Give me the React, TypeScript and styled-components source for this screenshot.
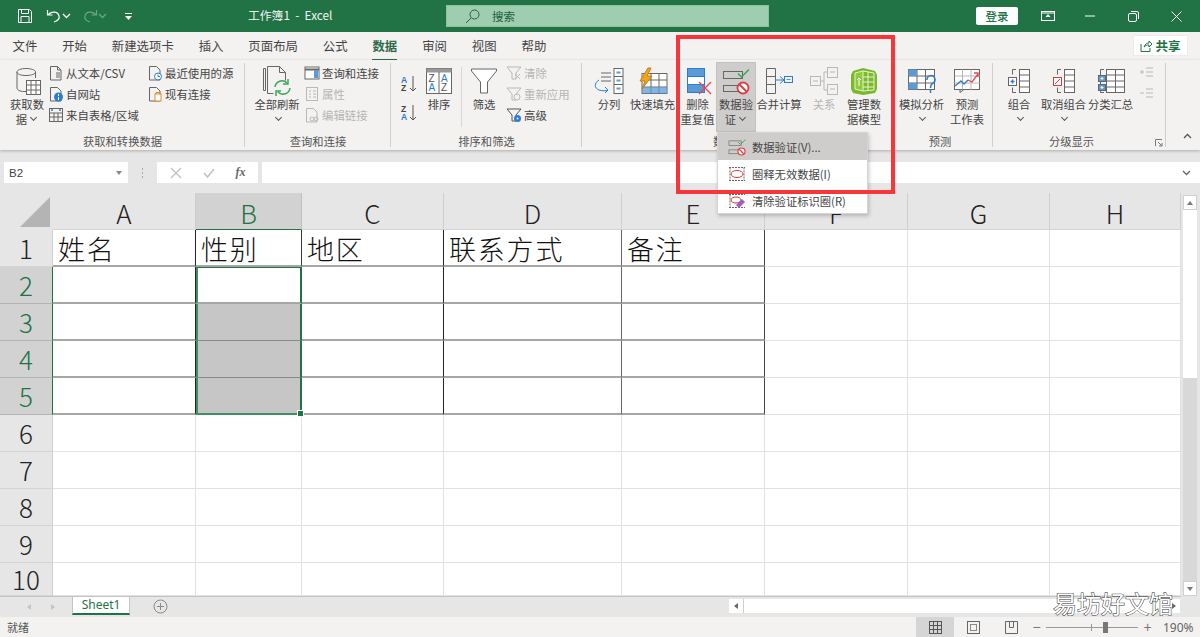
import React from "react";
import styled, { createGlobalStyle } from "styled-components";

const CJK = `"Noto Sans CJK SC", "Noto Sans", sans-serif`;

const Global = createGlobalStyle`
  html, body { margin: 0; padding: 0; width: 1200px; height: 637px; overflow: hidden; }
  body { font-family: ${CJK}; color: #444; }
  * { box-sizing: border-box; }
`;

const Page = styled.div`
  position: relative; width: 1200px; height: 637px; display: flex; flex-direction: column;
  background: #e6e6e6; overflow: hidden;
`;

/* ---------- title bar ---------- */
const TitleBar = styled.header`
  height: 32px; background: #217346; display: flex; align-items: center; color: #fff; flex: none;
`;
const Qat = styled.div`
  width: 248px; display: flex; align-items: center; padding-left: 17px; flex: none;
`;
const QatItem = styled.span<{ $w: number }>`
  width: ${p => p.$w}px; display: flex; align-items: center; flex: none;
`;
const DocTitle = styled.div`
  width: 198px; flex: none; font-size: 11.8px; line-height: 16px; margin-top: -2px; color: #f0f6f2; white-space: pre;
`;
const SearchBox = styled.div`
  width: 323px; height: 22px; background: #9fcdb0; border: 1px solid #8cc0a2; display: flex; align-items: center;
  padding-left: 18px; gap: 12px; color: #23613e; font-size: 11.5px; flex: none;
`;
const LoginBtn = styled.button`
  margin-left: 207px; width: 42px; height: 18px; border: 0; border-radius: 2px; background: #fff; color: #217346;
  font: 500 11.5px ${CJK}; padding: 0; flex: none;
`;
const WinBtn = styled.span<{ $ml: number }>`
  margin-left: ${p => p.$ml}px; display: flex; flex: none;
`;

/* ---------- tabs ---------- */
const TabBar = styled.nav`
  height: 28px; background: #f3f2f1; display: flex; align-items: flex-start; padding: 5px 12.5px 0; gap: 24.9px; position: relative; flex: none;
`;
const Tab = styled.div<{ $on?: boolean }>`
  font-size: 12.4px; line-height: 18px; height: 24px; color: ${p => (p.$on ? "#2f6b4a" : "#444")};
  font-weight: ${p => (p.$on ? 700 : 400)}; border-bottom: ${p => (p.$on ? "2.5px solid #217346" : "0")}; white-space: nowrap;
`;
const ShareBtn = styled.button`
  position: absolute; left: 1133px; top: 3px; width: 55px; height: 21px; border: 1px solid #ececec; background: #fff; color: #217346;
  font: 700 12.5px ${CJK}; display: flex; align-items: center; justify-content: center; gap: 3px; padding: 0;
`;

/* ---------- ribbon ---------- */
const Ribbon = styled.section`
  height: 90px; background: #f3f2f1; display: flex; flex: none; box-shadow: 0 1px 3px rgba(0,0,0,.25); position: relative;
`;
const Group = styled.div<{ $w: number; $last?: boolean }>`
  width: ${p => p.$w}px; flex: none; display: flex; flex-direction: column; position: relative;
  &::after {
    content: ""; display: ${p => (p.$last ? "none" : "block")}; position: absolute; right: 0; top: 3px; bottom: 3px; width: 1px; background: #d0cfce;
  }
`;
const GroupBody = styled.div<{ $pl: number }>`
  flex: 1; display: flex; padding-left: ${p => p.$pl}px; min-height: 0;
`;
const GroupLabel = styled.div<{ $pr?: number }>`
  height: 16px; padding-right: ${p => p.$pr ?? 0}px; text-align: center; font-size: 11.3px; line-height: 14px; color: #555; flex: none;
`;
const BigBtn = styled.div<{ $w: number; $ml?: number; $on?: boolean; $off?: boolean }>`
  width: ${p => p.$w}px; margin-left: ${p => p.$ml ?? 0}px; flex: none; height: 70px; margin-top: 2px; display: flex; flex-direction: column;
  align-items: center; font-size: 11.3px; line-height: 15px; text-align: center; white-space: nowrap;
  color: ${p => (p.$off ? "#b5b5b5" : "#444")};
  background: ${p => (p.$on ? "#cfcdcb" : "transparent")};
  box-shadow: ${p => (p.$on ? "inset 0 0 0 1px #c4c2c0" : "none")};
`;
const BigIcon = styled.div`
  height: 35px; display: flex; align-items: center; justify-content: center; flex: none; padding-top: 2px;
`;
const Caret = styled.span`
  display: inline-block; width: 9px; height: 9px; vertical-align: middle; margin-left: 2px; position: relative; top: -1px;
  &::before {
    content: ""; display: block; width: 4px; height: 4px; border-right: 1px solid #555; border-bottom: 1px solid #555; transform: rotate(45deg); margin: 0 0 0 2px;
  }
`;
const SmallCol = styled.div<{ $w: number; $ml?: number }>`
  width: ${p => p.$w}px; margin-left: ${p => p.$ml ?? 0}px; flex: none; padding-top: 2px; display: flex; flex-direction: column;
`;
const SmallRow = styled.div<{ $off?: boolean }>`
  height: 21px; display: flex; align-items: center; gap: 2px; font-size: 11.4px; white-space: nowrap;
  color: ${p => (p.$off ? "#b5b5b5" : "#444")};
`;
const SortStack = styled.div`
  width: 25px; flex: none; padding-top: 14px; display: flex; flex-direction: column; gap: 9px;
`;
const VSep = styled.div`
  width: 1px; height: 60px; margin: 7px 8px 0 8px; background: #d8d7d6; flex: none;
`;
const Launcher = styled.div`
  position: absolute; right: 3px; bottom: 3px; display: flex;
`;

/* ---------- formula bar ---------- */
const FormulaBar = styled.div`
  margin-top: 12px; height: 21px; display: flex; align-items: stretch; padding-left: 4px; flex: none;
`;
const NameBox = styled.div`
  width: 124px; background: #fff; display: flex; align-items: center; justify-content: space-between; padding: 0 5px; font-size: 11.5px; color: #444;
  font-family: "Liberation Sans", sans-serif;
`;
const Dots = styled.div`
  width: 29px; display: flex; align-items: center; justify-content: center; color: #aaa;
`;
const FxBox = styled.div`
  width: 101px; background: #fff; display: flex; align-items: center; justify-content: space-around; padding: 0 2px;
`;
const FxText = styled.span`
  font: italic 700 12px "Liberation Serif", serif; color: #666;
`;
const FormulaInput = styled.div`
  margin-left: 4px; flex: 1; background: #fff; display: flex; align-items: center; justify-content: flex-end; padding-right: 9px;
`;

/* ---------- sheet ---------- */
const SheetArea = styled.main`
  margin-top: 10px; height: 404px; display: flex; flex: none;
`;
const Grid = styled.div`
  width: 1181px; display: grid; flex: none; background: #fff; border-bottom: 1px solid #c4c4c4;
  grid-template-columns: 53px 143px 106px 142px 178px 143px 143px 142px 131px;
  grid-template-rows: 37px repeat(9, 37px) 1fr;
`;
const Corner = styled.div`
  background: #e6e6e6; display: flex; align-items: flex-end; justify-content: flex-end; padding: 0 2px 2px 0;
`;
const ColHead = styled.div<{ $on?: boolean }>`
  background: ${p => (p.$on ? "#d2d2d2" : "#e6e6e6")}; color: ${p => (p.$on ? "#217346" : "#222")};
  border-right: 1px solid ${p => (p.$on ? "#c0c0c0" : "#cfcfcf")};
  border-bottom: 1px solid ${p => (p.$on ? "#217346" : "#d4d4d4")};
  display: flex; align-items: center; justify-content: center; font: 300 26px/30px ${CJK}; padding-top: 3px;
`;
const RowHead = styled.div<{ $on?: boolean }>`
  background: ${p => (p.$on ? "#d2d2d2" : "#e6e6e6")}; color: ${p => (p.$on ? "#217346" : "#222")};
  border-right: 1px solid ${p => (p.$on ? "#217346" : "#cfcfcf")};
  border-bottom: 1px solid ${p => (p.$on ? "#b4b4b4" : "#d4d4d4")};
  display: flex; align-items: center; justify-content: center; font: 300 26px/30px ${CJK}; padding-bottom: 1px;
`;
const Cell = styled.div<{ $tb?: boolean; $shade?: string; $sel?: boolean; $gray?: boolean; $first?: boolean; $lastSel?: boolean }>`
  position: relative;
  background: ${p => (p.$gray ? "#c6c6c6" : "#fff")};
  border-right: 1px solid ${p => p.$shade ?? "#e2e2e2"};
  border-bottom: ${p => (p.$tb ? "2px solid #a6a6a6" : "1px solid #e2e2e2")};
  font: 300 27px/36px ${CJK}; color: #111; letter-spacing: 1.8px; padding-left: 5px; padding-top: 1px; white-space: nowrap;
  ${p => p.$sel && `
    border-left: 2px solid #3f8f66; border-right: 2px solid #217346;
    border-bottom: ${p.$lastSel ? "2px solid #3f8f66" : p.$gray ? "1px solid #8a8a8a" : "2px solid #a6a6a6"};
  `}
  ${p => p.$first && `border-top: 1px solid #217346;`}
`;
const Handle = styled.span`
  position: absolute; right: -4px; bottom: -4px; width: 5px; height: 5px; background: #217346; border: 1px solid #fff; box-sizing: content-box; z-index: 2;
`;
const VScroll = styled.aside`
  width: 19px; background: #e6e6e6; display: flex; flex-direction: column; padding: 2px 3px 1px 2px; flex: none;
`;
const VTrack = styled.div`
  flex: 1; background: #d8d8d8; display: flex; flex-direction: column;
`;
const ScrollBtn = styled.div`
  height: 15px; background: #fff; border: 1px solid #d0d0d0; display: flex; align-items: center; justify-content: center; flex: none;
`;
const ScrollThumb = styled.div`
  height: 168px; background: #fff; margin-bottom: auto; flex: none;
`;

/* ---------- sheet tabs ---------- */
const SheetBar = styled.div`
  height: 20px; background: #e6e6e6; display: flex; align-items: flex-start; flex: none;
`;
const SheetNav = styled.div`
  width: 72px; height: 19px; display: flex; align-items: center; justify-content: center; gap: 16px; padding-left: 10px; flex: none;
`;
const SheetTab = styled.div`
  width: 58px; height: 18px; background: #fff; color: #217346; border-bottom: 2px solid #217346; border-left: 1px solid #c4c4c4; border-right: 1px solid #c4c4c4;
  font: 400 12px/15px "Noto Sans", sans-serif; text-align: center; flex: none;
`;
const AddSheet = styled.div`
  margin: 2px 0 0 23px; display: flex; flex: none;
`;
const HScroll = styled.div`
  margin: 2px 0 0 561px; width: 451px; display: flex; align-items: center; flex: none;
`;
const HTrack = styled.div`
  flex: 1; height: 14px; background: #fff; display: flex; align-items: center; justify-content: flex-end; padding-right: 2px;
`;
const HEnd = styled.div`
  width: 15px; height: 14px; display: flex; align-items: center; justify-content: center; background: #fff; border-right: 1px solid #d0d0d0; flex: none;
`;

/* ---------- status bar ---------- */
const StatusBar = styled.footer`
  height: 20px; background: #f3f2f1; display: flex; align-items: center; padding-left: 7px; font-size: 11px; color: #555; flex: none;
`;
const StatusText = styled.span`
  width: 909px; flex: none;
`;
const ViewBtn = styled.div<{ $on?: boolean }>`
  width: 38px; height: 20px; background: ${p => (p.$on ? "#d5d5d5" : "transparent")}; display: flex; align-items: center; justify-content: center; flex: none;
`;
const ZoomMark = styled.span`
  width: 13px; text-align: center; font: 400 14px "Liberation Sans", sans-serif; color: #777; flex: none;
`;
const ZoomTrack = styled.div`
  width: 92px; height: 1px; margin: 0 3px; background: #999; position: relative; flex: none;
`;
const ZoomTick = styled.span`
  position: absolute; left: 45px; top: -3px; width: 1px; height: 7px; background: #999;
`;
const ZoomThumb = styled.span`
  position: absolute; left: 57px; top: -5px; width: 5px; height: 11px; background: #777;
`;
const ZoomVal = styled.span`
  margin-left: 9px; font: 400 12px "Noto Sans", sans-serif; color: #666; flex: none;
`;

/* ---------- overlays ---------- */
const Menu = styled.div`
  position: absolute; left: 717px; top: 132px; width: 151px; height: 82px; background: #fff; border: 1px solid #d4d4d4; box-shadow: 1px 2px 4px rgba(0,0,0,.22); z-index: 5;
`;
const MenuItem = styled.div<{ $on?: boolean }>`
  height: 27px; display: flex; align-items: center; gap: 6px; padding-left: 10px; font-size: 11.3px; color: #444; white-space: nowrap;
  background: ${p => (p.$on ? "#cfcdcb" : "transparent")};
`;
const RedBox = styled.div`
  position: absolute; left: 676px; top: 35px; width: 219px; height: 159px; border: 4px solid #f8353b; z-index: 6; pointer-events: none;
`;
const Watermark = styled.div`
  position: absolute; left: 1053px; top: 589px; z-index: 7; font: 400 24px/28px ${CJK}; color: #fff; -webkit-text-stroke: 1px #333; paint-order: stroke fill; white-space: nowrap;
`;

/* ---------- icons ---------- */
const Svg = ({ w, h, children }: { w: number; h: number; children: React.ReactNode }) => (
  <svg width={w} height={h} viewBox={`0 0 ${w} ${h}`} fill="none" strokeWidth="1">{children}</svg>
);
const G = "#666";
const B = "#5b9bd5";
const Lg = "#b8b8b8";

const DocS = ({ s = G }: { s?: string }) => <path d="M2.500 1.500h7l3.500 3.500v10h-10.500z" stroke={s} />;

const IcoDb = () => (
  <Svg w={28} h={30}>
    <path d="M4 6v16c0 2 3 3.500 7 3.500h3M22.500 6v6M4 6c0-2 4-3.500 9-3.500s9.500 1.500 9.500 3.500-4 3.500-9.500 3.500S4 8 4 6z" stroke={G} />
    <rect x="13.500" y="14.500" width="14" height="14" fill="#fff" stroke={G} />
    <path d="M13.500 19h14M13.500 24h14M18 14.500v14M23 14.500v14" stroke={G} />
  </Svg>
);
const IcoText = () => <Svg w={16} h={16}><DocS /><path d="M8 8h4M8 10h4M8 12h4" stroke={G} /><path d="M9.500 1.500v3.500h3.500" stroke={G} /></Svg>;
const IcoWeb = () => <Svg w={16} h={16}><DocS /><circle cx="10.500" cy="11" r="4.500" fill="#2b7cd3" /><path d="M10.500 8v2M10.500 11v3" stroke="#fff" /></Svg>;
const IcoTable = () => (
  <Svg w={16} h={16}>
    <rect x="1.500" y="1.500" width="13" height="13" stroke={G} />
    <path d="M1.500 6h13M1.500 10h13M6 6v8.500M10 6v8.500" stroke={G} />
    <path d="M3 3h2M11 3h2" stroke={B} strokeWidth="2" />
  </Svg>
);
const IcoRecent = () => <Svg w={16} h={16}><DocS /><circle cx="11" cy="11.500" r="3.500" fill="#fff" stroke="#2b7cd3" /><path d="M11 9.500v2h2" stroke="#2b7cd3" /></Svg>;
const IcoExist = () => <Svg w={16} h={16}><DocS /><rect x="8" y="8" width="6" height="7" fill="#fff" stroke="#e8862e" /><path d="M9 8V6.500h4V8" stroke="#e8862e" /></Svg>;
const IcoRefresh = () => (
  <Svg w={32} h={34}>
    <path d="M2.500 4.500h2v22h-2zM6.500 2.500h12l6 6v8M6.500 2.500v27h6" stroke={G} />
    <path d="M18.500 2.500v6h6" stroke={G} />
    <path d="M14 23a7 7 0 0 1 12-4M29 24a7 7 0 0 1-12 4" stroke="#3aa655" strokeWidth="1.500" />
    <path d="M27 15v5h-5M15 32v-5h5" stroke="#3aa655" strokeWidth="1.500" />
  </Svg>
);
const IcoQuery = () => (
  <Svg w={16} h={16}>
    <rect x="1" y="2" width="14" height="12" fill="#fff" stroke={G} />
    <path d="M1 4.500h14" stroke={G} strokeWidth="2" />
    <rect x="10" y="5" width="4" height="8" fill={B} />
  </Svg>
);
const IcoProp = () => <Svg w={16} h={16}><rect x="2.500" y="1.500" width="11" height="13" stroke={Lg} /><path d="M5 5h2M5 8h2M5 11h2M9 5h3M9 8h3M9 11h3" stroke={Lg} /></Svg>;
const IcoEdit = () => <Svg w={16} h={16}><DocS s={Lg} /><circle cx="8" cy="12" r="2" stroke={Lg} /><circle cx="12" cy="12" r="2" stroke={Lg} /></Svg>;
const IcoAz = ({ flip }: { flip?: boolean }) => (
  <svg width="18" height="20" viewBox="0 0 18 20" fill="none">
    <text x="1" y="8.500" fontSize="8.500" fontWeight="700" fontFamily="Liberation Sans" fill={flip ? "#444" : "#2b7cd3"}>{flip ? "Z" : "A"}</text>
    <text x="1" y="17" fontSize="8.500" fontWeight="700" fontFamily="Liberation Sans" fill={flip ? "#2b7cd3" : "#444"}>{flip ? "A" : "Z"}</text>
    <path d="M13 2v15M10 14l3 3 3-3" stroke="#555" />
  </svg>
);
const IcoSort = () => (
  <svg width="28" height="28" viewBox="0 0 28 28" fill="none">
    <rect x="1.500" y="1.500" width="25" height="25" fill="#fff" stroke="#666" />
    <rect x="1.500" y="1.500" width="25" height="4" fill="#999" />
    <path d="M14 5v21" stroke="#666" />
    <text x="3.500" y="15" fontSize="10" fontFamily="Liberation Sans" fill="#555">Z</text>
    <text x="3.500" y="24" fontSize="10" fontFamily="Liberation Sans" fill="#2b7cd3">A</text>
    <text x="16" y="15" fontSize="10" fontFamily="Liberation Sans" fill="#2b7cd3">A</text>
    <text x="16" y="24" fontSize="10" fontFamily="Liberation Sans" fill="#555">Z</text>
  </svg>
);
const IcoFilter = () => <Svg w={28} h={28}><path d="M1.500 2h25v2l-9 11v11h-7V15l-9-11z" fill="#fff" stroke={G} /></Svg>;
const IcoClear = () => <Svg w={16} h={16}><path d="M1 2h14l-5 6v6H6V8z" stroke={Lg} /><path d="M9 9l5 5M14 9l-5 5" stroke={Lg} /></Svg>;
const IcoReapply = () => <Svg w={16} h={16}><path d="M1 2h14l-5 6v6H6V8z" stroke={Lg} /><circle cx="11" cy="11" r="3" stroke={Lg} fill="#f3f2f1" /></Svg>;
const IcoAdv = () => <Svg w={16} h={16}><path d="M1 2h14l-5 6v6H6V8z" stroke="#555" /><circle cx="11.500" cy="11.500" r="3.500" fill="#2b7cd3" /><circle cx="11.500" cy="11.500" r="1" fill="#fff" /></Svg>;
const IcoSplit = () => (
  <Svg w={30} h={28}>
    <rect x="20" y="1.500" width="9" height="25" fill="#fff" stroke={G} />
    <path d="M20 9.500h9M20 17.500h9M7 6h10M7 10h10M7 14h10" stroke={G} />
    <path d="M22.500 5.500h4M22.500 13.500h4M22.500 21.500h4" stroke={B} strokeWidth="2" />
    <path d="M5 13c-5 3-5 8 0 10 3 1 7 1 9 0M11 20l3 3-3 3" stroke="#2b7cd3" />
  </Svg>
);
const IcoFlash = () => (
  <Svg w={30} h={28}>
    <rect x="4" y="6.500" width="25" height="20" fill="#fff" stroke={G} />
    <path d="M4 13h25M4 20h25M13 6.500v20M21 6.500v20" stroke={G} />
    <rect x="4" y="20" width="25" height="6.500" fill={B} opacity=".75" />
    <path d="M10 1L2 14h5l-3 8 10-13H9l4-8z" fill="#f2a31f" stroke="#c47f0e" />
  </Svg>
);
const IcoDedupe = () => (
  <Svg w={28} h={28}>
    <rect x="3.500" y="1.500" width="17" height="24" fill="#fff" stroke="#2b7cd3" />
    <rect x="3.500" y="1.500" width="17" height="8" fill={B} stroke="#2b7cd3" />
    <rect x="3.500" y="17.500" width="17" height="8" fill={B} stroke="#2b7cd3" />
    <path d="M15 15l12 12M27 15L15 27" stroke="#e8464a" strokeWidth="1.300" />
  </Svg>
);
const IcoValidate = ({ s = 28 }: { s?: number }) => (
  <svg width={s} height={s} viewBox="0 0 28 28" fill="none">
    <rect x="1.500" y="4.500" width="19" height="7" stroke="#666" />
    <rect x="1.500" y="18.500" width="16" height="6" stroke="#666" />
    <path d="M16 6.500l3.500 3.500L27 2.500" stroke="#3aa655" strokeWidth="1.500" />
    <circle cx="21" cy="21" r="5.500" fill="#fff" stroke="#e0393e" strokeWidth="1.800" />
    <path d="M17.500 17.500l7 7" stroke="#e0393e" strokeWidth="1.800" />
  </svg>
);
const IcoConsol = () => (
  <Svg w={28} h={28}>
    <path d="M1.500 1.500h9v25h-9zM1.500 9.500h9M1.500 17.500h9" stroke={G} />
    <path d="M10 13h9M15 9.500l4 3.500-4 3.500" stroke="#2b7cd3" />
    <rect x="19.500" y="9.500" width="8" height="6" stroke="#2b7cd3" />
    <path d="M21.500 12.500h4" stroke={B} />
  </Svg>
);
const IcoRel = () => (
  <Svg w={28} h={28}>
    <rect x="0.500" y="9.500" width="10" height="9" stroke={Lg} />
    <rect x="17.500" y="0.500" width="10" height="10" stroke={Lg} />
    <rect x="17.500" y="17.500" width="10" height="10" stroke={Lg} />
    <path d="M10 14h4V5h3M14 14v9h3M3 14h5M20 5h5M20 22h5" stroke={Lg} />
  </Svg>
);
const IcoModel = () => (
  <Svg w={28} h={28}>
    <path d="M3 4l10-3 12 3 2 4v14l-2 4-12 2-10-2-2-4V8z" fill="#7ab929" />
    <path d="M5 6l8-2v20l-8-2z" fill="#8ccb3a" stroke="#e6f3d6" />
    <path d="M13 4l11 2v17l-11 1" stroke="#e6f3d6" />
    <path d="M13 10h11M13 15h11M13 20h11M18 5v19" stroke="#e6f3d6" />
    <path d="M9 19v-8M7 13l2-2 2 2" stroke="#fff" />
  </Svg>
);
const IcoWhatIf = () => (
  <Svg w={30} h={26}>
    <rect x="1.500" y="1.500" width="26" height="20" fill="#fff" stroke={G} />
    <path d="M1.500 8h26M1.500 15h26M10 1.500v20M18.500 1.500v20" stroke={G} />
    <rect x="1.500" y="1.500" width="8.500" height="6.500" fill={B} />
    <rect x="1.500" y="15" width="8.500" height="6.500" fill={B} />
    <path d="M20 12a4 4 0 1 1 6 3c-2 1-2.500 3-2.500 5M23.500 22v3" stroke="#2b7cd3" strokeWidth="1.500" />
  </Svg>
);
const IcoForecast = () => (
  <Svg w={28} h={26}>
    <rect x="1.500" y="1.500" width="25" height="20" fill="#fff" stroke={G} />
    <path d="M1.500 8h25M1.500 15h25M9.500 1.500v20M18 1.500v20" stroke={Lg} />
    <path d="M2 18l6-5 3 3 4-4" stroke="#2b7cd3" strokeWidth="1.300" />
    <path d="M15 12l4 2 6-8M21 5h4v4" stroke="#e8464a" strokeWidth="1.300" />
    <path d="M7 21.500v3l4-3" stroke={G} />
  </Svg>
);
const IcoGroup = ({ ungroup }: { ungroup?: boolean }) => (
  <Svg w={24} h={26}>
    <path d="M9 1.500H5.500v5M9 24.500H5.500v-5" stroke={G} />
    <rect x="12.500" y="1.500" width="10" height="23" fill="#fff" stroke={G} />
    <path d="M12.500 7h10M12.500 13h10M12.500 19h10" stroke={G} />
    <rect x="1.500" y="9.500" width="8" height="8" fill="#fff" stroke={ungroup ? "#e0393e" : G} />
    {ungroup ? <path d="M3 16l5-5" stroke="#e0393e" /> : <path d="M3.500 13.500h4M5.500 11.500v4" stroke="#2b7cd3" strokeWidth="1.500" />}
  </Svg>
);
const IcoSubtotal = () => (
  <Svg w={28} h={26}>
    <rect x="9.500" y="1.500" width="18" height="23" fill="#fff" stroke={G} />
    <path d="M9.500 7h18M9.500 13h18M9.500 19h18M18.500 1.500v23M7 1.500H3.500v23H7" stroke={G} />
    <rect x="1.500" y="7.500" width="7" height="6" fill={B} stroke={G} />
    <rect x="1.500" y="16.500" width="7" height="6" fill={B} stroke={G} />
    <path d="M3.500 10.500h3M5 9v3M3.500 19.500h3M5 18v3" stroke="#fff" />
  </Svg>
);
const IcoOutline = ({ minus }: { minus?: boolean }) => (
  <Svg w={15} h={11}>
    <path d={minus ? "M1 5h4" : "M1 5h4M3 3v4"} stroke={Lg} />
    <path d="M7 1h7M7 5h7M7 9h7" stroke={Lg} />
  </Svg>
);
const Chevron = ({ c = "#666", up }: { c?: string; up?: boolean }) => (
  <Svg w={9} h={6}><path d={up ? "M1 5l3.500-3.500L8 5" : "M1 1l3.500 3.500L8 1"} stroke={c} strokeWidth="1.300" /></Svg>
);
const Tri = ({ c = "#777", dir = "down" }: { c?: string; dir?: "down" | "up" | "left" | "right" }) => {
  const d = { down: "M1 2h6L4 6z", up: "M1 6h6L4 2z", left: "M6 1v6L2 4z", right: "M2 1v6l4-3z" }[dir];
  return <Svg w={8} h={8}><path d={d} fill={c} /></Svg>;
};
const IcoCircle = () => (
  <Svg w={18} h={18}>
    <path d="M1 2.500h16M1 15.500h16M2 2.500v13M16 2.500v13" stroke={G} strokeDasharray="2 1" />
    <ellipse cx="9" cy="9" rx="6" ry="3.500" stroke="#e0393e" fill="#fff" />
  </Svg>
);
const IcoErase = () => (
  <Svg w={18} h={18}>
    <path d="M1 2.500h16M1 15.500h16M2 2.500v13" stroke={G} strokeDasharray="2 1" />
    <ellipse cx="8" cy="8" rx="5" ry="3" stroke="#e0393e" />
    <path d="M8 13l6-6 3 3-6 6z" fill="#a45cc4" />
  </Svg>
);

/* ---------- data ---------- */
const cols = ["A", "B", "C", "D", "E", "F", "G", "H"];
const headers = ["姓名", "性别", "地区", "联系方式", "备注"];
const lineShade = ["#222", "#3a3a3a", "#222", "#666", "#444"];

export default function App() {
  return (
    <Page>
      <Global />
      <TitleBar>
        <Qat>
          <QatItem $w={29}>
            <Svg w={16} h={16}><path d="M1.500 1.500h11l2 2v11h-13z" stroke="#fff" /><path d="M4.500 1.500v4h7v-4M4 14.500v-6h8v6" stroke="#fff" /></Svg>
          </QatItem>
          <QatItem $w={36}>
            <Svg w={16} h={16}><path d="M1.500 2v5h5M2 7c3-4 10-4 11 1 1 3-2 5-5 6" stroke="#fff" strokeWidth="1.200" /></Svg>
            <Chevron c="#fff" />
          </QatItem>
          <QatItem $w={42}>
            <Svg w={16} h={16}><path d="M14.500 2v5h-5M14 7c-3-4-10-4-11 1-1 3 2 5 5 6" stroke="#6ea486" strokeWidth="1.200" /></Svg>
            <Chevron c="#6ea486" />
          </QatItem>
          <QatItem $w={14}>
            <Svg w={9} h={9}><path d="M1 1.500h7" stroke="#fff" /><path d="M1 4h7L4.500 8z" fill="#fff" /></Svg>
          </QatItem>
        </Qat>
        <DocTitle>工作簿1  -  Excel</DocTitle>
        <SearchBox>
          <Svg w={15} h={15}><circle cx="9.500" cy="5.500" r="4.500" stroke="#23613e" /><path d="M6 9l-5 5" stroke="#23613e" /></Svg>
          <span>搜索</span>
        </SearchBox>
        <LoginBtn>登录</LoginBtn>
        <WinBtn $ml={23}>
          <Svg w={14} h={12}><rect x="0.500" y="1.500" width="13" height="9" stroke="#fff" /><path d="M0.500 3h13" stroke="#fff" /><path d="M4.500 7l2.500-3 2.500 3z" fill="#fff" /></Svg>
        </WinBtn>
        <WinBtn $ml={30}>
          <Svg w={10} h={10}><path d="M0 5h10" stroke="#fff" /></Svg>
        </WinBtn>
        <WinBtn $ml={33}>
          <Svg w={11} h={11}><rect x="0.500" y="2.500" width="8" height="8" rx="1.500" stroke="#fff" /><path d="M3 0.500h6a1.500 1.500 0 0 1 1.500 1.500v6" stroke="#fff" /></Svg>
        </WinBtn>
        <WinBtn $ml={32}>
          <Svg w={11} h={11}><path d="M0.500 0.500l10 10M10.500 0.500l-10 10" stroke="#fff" /></Svg>
        </WinBtn>
      </TitleBar>

      <TabBar>
        {["文件", "开始", "新建选项卡", "插入", "页面布局", "公式"].map(t => <Tab key={t}>{t}</Tab>)}
        <Tab $on>数据</Tab>
        {["审阅", "视图", "帮助"].map(t => <Tab key={t}>{t}</Tab>)}
        <ShareBtn>
          <Svg w={12} h={12}><path d="M1 4v7.500h9V8M4 7c1-3 3-4 5-4V1l3 3-3 3V5C7 5 5.500 5.500 4 7z" stroke="#217346" /></Svg>
          共享
        </ShareBtn>
      </TabBar>

      <Ribbon>
        <Group $w={245}>
          <GroupBody $pl={8}>
            <BigBtn $w={38}>
              <BigIcon><IcoDb /></BigIcon>
              <span>获取数</span>
              <span>据<Caret /></span>
            </BigBtn>
            <SmallCol $w={99} $ml={2}>
              <SmallRow><IcoText />从文本/CSV</SmallRow>
              <SmallRow><IcoWeb />自网站</SmallRow>
              <SmallRow><IcoTable />来自表格/区域</SmallRow>
            </SmallCol>
            <SmallCol $w={90}>
              <SmallRow><IcoRecent />最近使用的源</SmallRow>
              <SmallRow><IcoExist />现有连接</SmallRow>
            </SmallCol>
          </GroupBody>
          <GroupLabel>获取和转换数据</GroupLabel>
        </Group>

        <Group $w={146}>
          <GroupBody $pl={9}>
            <BigBtn $w={46}>
              <BigIcon><IcoRefresh /></BigIcon>
              <span>全部刷新</span>
              <span><Caret /></span>
            </BigBtn>
            <SmallCol $w={80} $ml={4}>
              <SmallRow><IcoQuery />查询和连接</SmallRow>
              <SmallRow $off><IcoProp />属性</SmallRow>
              <SmallRow $off><IcoEdit />编辑链接</SmallRow>
            </SmallCol>
          </GroupBody>
          <GroupLabel>查询和连接</GroupLabel>
        </Group>

        <Group $w={191}>
          <GroupBody $pl={9}>
            <SortStack>
              <IcoAz />
              <IcoAz flip />
            </SortStack>
            <BigBtn $w={28}>
              <BigIcon><IcoSort /></BigIcon>
              <span>排序</span>
            </BigBtn>
            <VSep />
            <BigBtn $w={28}>
              <BigIcon><IcoFilter /></BigIcon>
              <span>筛选</span>
            </BigBtn>
            <SmallCol $w={70} $ml={8}>
              <SmallRow $off><IcoClear />清除</SmallRow>
              <SmallRow $off><IcoReapply />重新应用</SmallRow>
              <SmallRow><IcoAdv />高级</SmallRow>
            </SmallCol>
          </GroupBody>
          <GroupLabel>排序和筛选</GroupLabel>
        </Group>

        <Group $w={311}>
          <GroupBody $pl={11}>
            <BigBtn $w={32}>
              <BigIcon><IcoSplit /></BigIcon>
              <span>分列</span>
            </BigBtn>
            <BigBtn $w={47} $ml={4}>
              <BigIcon><IcoFlash /></BigIcon>
              <span>快速填充</span>
            </BigBtn>
            <BigBtn $w={37} $ml={3}>
              <BigIcon><IcoDedupe /></BigIcon>
              <span>删除</span>
              <span>重复值</span>
            </BigBtn>
            <BigBtn $w={40} $on>
              <BigIcon><IcoValidate /></BigIcon>
              <span>数据验</span>
              <span>证<Caret /></span>
            </BigBtn>
            <BigBtn $w={46}>
              <BigIcon><IcoConsol /></BigIcon>
              <span>合并计算</span>
            </BigBtn>
            <BigBtn $w={40} $off $ml={2}>
              <BigIcon><IcoRel /></BigIcon>
              <span>关系</span>
            </BigBtn>
            <BigBtn $w={40}>
              <BigIcon><IcoModel /></BigIcon>
              <span>管理数</span>
              <span>据模型</span>
            </BigBtn>
          </GroupBody>
          <GroupLabel $pr={4}>数据工具</GroupLabel>
        </Group>

        <Group $w={100}>
          <GroupBody $pl={5}>
            <BigBtn $w={47}>
              <BigIcon><IcoWhatIf /></BigIcon>
              <span>模拟分析</span>
              <span><Caret /></span>
            </BigBtn>
            <BigBtn $w={38} $ml={3}>
              <BigIcon><IcoForecast /></BigIcon>
              <span>预测</span>
              <span>工作表</span>
            </BigBtn>
          </GroupBody>
          <GroupLabel $pr={6}>预测</GroupLabel>
        </Group>

        <Group $w={173}>
          <GroupBody $pl={11}>
            <BigBtn $w={30}>
              <BigIcon><IcoGroup /></BigIcon>
              <span>组合</span>
              <span><Caret /></span>
            </BigBtn>
            <BigBtn $w={47} $ml={6}>
              <BigIcon><IcoGroup ungroup /></BigIcon>
              <span>取消组合</span>
              <span><Caret /></span>
            </BigBtn>
            <BigBtn $w={47}>
              <BigIcon><IcoSubtotal /></BigIcon>
              <span>分类汇总</span>
            </BigBtn>
            <SmallCol $w={20} $ml={5}>
              <SmallRow><IcoOutline /></SmallRow>
              <SmallRow><IcoOutline minus /></SmallRow>
            </SmallCol>
          </GroupBody>
          <GroupLabel $pr={16}>分级显示</GroupLabel>
          <Launcher>
            <Svg w={8} h={8}><path d="M0.500 7V0.500H7M3 3l4 4M7 4v3H4" stroke="#777" /></Svg>
          </Launcher>
        </Group>
        <Group $w={34} $last>
          <GroupBody $pl={17}>
            <SmallCol $w={12}>
              <SmallRow />
              <SmallRow />
              <SmallRow />
              <SmallRow><Chevron c="#555" up /></SmallRow>
            </SmallCol>
          </GroupBody>
        </Group>
      </Ribbon>

      <FormulaBar>
        <NameBox>B2<Tri c="#888" /></NameBox>
        <Dots>
          <Svg w={3} h={12}><path d="M1.500 1v2M1.500 5v2M1.500 9v2" stroke="#aaa" /></Svg>
        </Dots>
        <FxBox>
          <Svg w={12} h={12}><path d="M1 1l10 10M11 1L1 11" stroke="#c0c0c0" strokeWidth="1.300" /></Svg>
          <Svg w={12} h={12}><path d="M1 6l3.500 4L11 2" stroke="#c0c0c0" strokeWidth="1.500" /></Svg>
          <FxText>fx</FxText>
        </FxBox>
        <FormulaInput><Chevron c="#666" /></FormulaInput>
      </FormulaBar>

      <SheetArea>
        <Grid>
          <Corner>
            <Svg w={31} h={31}><path d="M30 0v30H0z" fill="#b4b4b4" /></Svg>
          </Corner>
          {cols.map(c => <ColHead key={c} $on={c === "B"}>{c}</ColHead>)}
          {Array.from({ length: 9 }, (_, i) => i + 1).map(r => (
            <React.Fragment key={r}>
              <RowHead $on={r >= 2 && r <= 5}>{r}</RowHead>
              {cols.map((c, ci) => {
                const inTable = r <= 5 && ci <= 4;
                const sel = ci === 1 && r >= 2 && r <= 5;
                return (
                  <Cell
                    key={c}
                    $tb={inTable}
                    $shade={inTable ? lineShade[ci] : undefined}
                    $sel={sel}
                    $gray={sel && r > 2}
                    $first={sel && r === 2}
                    $lastSel={sel && r === 5}
                  >
                    {r === 1 ? headers[ci] : null}
                    {sel && r === 5 ? <Handle /> : null}
                  </Cell>
                );
              })}
            </React.Fragment>
          ))}
          <RowHead>10</RowHead>
          {cols.map(c => <Cell key={c} />)}
        </Grid>
        <VScroll>
          <ScrollBtn><Tri dir="up" /></ScrollBtn>
          <VTrack>
            <ScrollThumb />
          </VTrack>
          <ScrollBtn><Tri /></ScrollBtn>
        </VScroll>
      </SheetArea>

      <SheetBar>
        <SheetNav>
          <Tri c="#c2c2c2" dir="left" />
          <Tri c="#c2c2c2" dir="right" />
        </SheetNav>
        <SheetTab>Sheet1</SheetTab>
        <AddSheet>
          <Svg w={15} h={15}><circle cx="7.500" cy="7.500" r="6.500" stroke="#8a8a8a" /><path d="M4 7.500h7M7.500 4v7" stroke="#8a8a8a" /></Svg>
        </AddSheet>
        <HScroll>
          <HEnd><Tri c="#666" dir="left" /></HEnd>
          <HTrack><Tri c="#666" dir="right" /></HTrack>
        </HScroll>
      </SheetBar>

      <StatusBar>
        <StatusText>就绪</StatusText>
        <ViewBtn $on>
          <Svg w={13} h={13}><rect x="0.500" y="0.500" width="12" height="12" stroke="#555" /><path d="M0.500 4.500h12M0.500 8.500h12M4.500 0.500v12M8.500 0.500v12" stroke="#555" /></Svg>
        </ViewBtn>
        <ViewBtn>
          <Svg w={13} h={13}><rect x="0.500" y="0.500" width="12" height="12" stroke="#666" /><rect x="3.500" y="3.500" width="6" height="6" stroke="#888" /></Svg>
        </ViewBtn>
        <ViewBtn>
          <Svg w={13} h={13}><path d="M0.500 0.500h12v12H0.500zM4.500 0.500v6h4v-6" stroke="#666" /></Svg>
        </ViewBtn>
        <ZoomMark>−</ZoomMark>
        <ZoomTrack><ZoomTick /><ZoomThumb /></ZoomTrack>
        <ZoomMark>+</ZoomMark>
        <ZoomVal>190%</ZoomVal>
      </StatusBar>

      <Menu>
        <MenuItem $on><IcoValidate s={18} />数据验证(V)...</MenuItem>
        <MenuItem><IcoCircle />圈释无效数据(I)</MenuItem>
        <MenuItem><IcoErase />清除验证标识圈(R)</MenuItem>
      </Menu>
      <RedBox />
      <Watermark>易坊好文馆</Watermark>
    </Page>
  );
}
